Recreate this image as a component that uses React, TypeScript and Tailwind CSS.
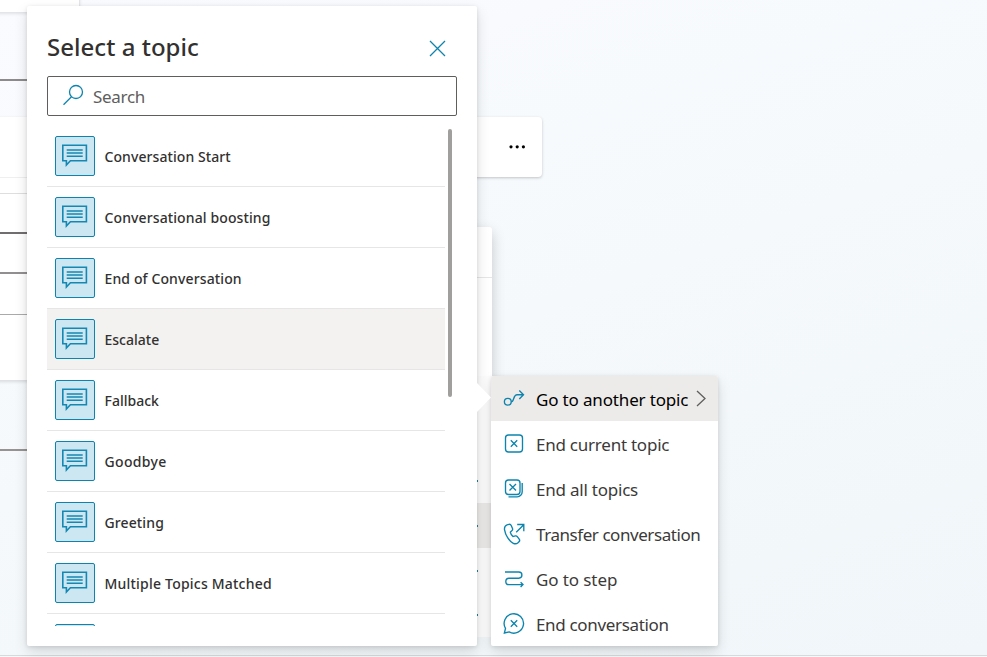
import React from "react";

const topics = [
  { name: "Conversation Start", cls: "tracking-[0.08px]" },
  { name: "Conversational boosting", cls: "tracking-[0.11px]" },
  { name: "End of Conversation", cls: "tracking-[0.12px]" },
  { name: "Escalate", cls: "tracking-[0px]", active: true },
  { name: "Fallback", cls: "tracking-[0px]" },
  { name: "Goodbye", cls: "tracking-[0.35px]" },
  { name: "Greeting", cls: "tracking-[0.12px]" },
  { name: "Multiple Topics Matched", cls: "tracking-[0.21px]" },
  { name: "", cls: "" },
];

function TopicIcon() {
  return (
    <div className="h-10 w-10 shrink-0 rounded-[2px] border border-[#0d84ad] bg-[#cce7f1]">
      <svg width="38" height="38" viewBox="0 0 38 38" fill="none" stroke="#1488b2">
        <path d="M6.8 8.2H30.4V23.8H14.4L10.4 28V23.8H6.8Z" strokeWidth="1.6" />
        <path d="M10.7 13H26.7M10.7 16.1H26.7M10.7 19.2H26.7" strokeWidth="1.5" />
      </svg>
    </div>
  );
}

const iconPaths: Record<string, React.ReactNode> = {
  goTo: (
    <>
      <circle cx="4.8" cy="13.7" r="3.4" />
      <path d="M8.2 13.7C11.5 13.7 9.7 7 14.2 6.7H20M16.3 2.5L20.5 6.7L16.3 10.9" />
    </>
  ),
  end: (
    <>
      <rect x="2.5" y="2" width="17" height="17" rx="3" />
      <path d="M7.8 7.3L14.2 13.7M14.2 7.3L7.8 13.7" />
    </>
  ),
  endAll: (
    <>
      <rect x="2.5" y="2" width="14.5" height="14.5" rx="3" />
      <path d="M6.5 6L13 12.5M13 6L6.5 12.5M19.2 5V13.8A5 5 0 0 1 14.2 18.8H5.5" />
    </>
  ),
  transfer: (
    <>
      <path d="M4 1.8L6 1.3C7 1.1 7.8 1.5 8.2 2.4L9.5 5.4C9.8 6.2 9.6 7 9 7.6L7.3 9.2C7.6 10.6 8.8 12.7 10.1 13.6L12.3 12.9C13.1 12.7 13.8 12.9 14.3 13.6L16.2 16.2C16.8 17 16.7 18 16 18.7L15 19.7C13.7 20.9 12 21.1 10.3 20.3C6 18.2 2.4 12.1 1.5 6.6C1.3 4.2 2.2 2.4 4 1.8Z" />
      <path d="M13.2 9.2L20.5 1.9M14.2 1.5H20.8V8.3" />
    </>
  ),
  step: (
    <path d="M2 4H15.8A3.1 3.1 0 0 1 15.8 10.2H6A3.2 3.2 0 0 0 6 16.6H20M17.6 14.2L20 16.6L17.6 19" />
  ),
  endConv: (
    <>
      <path d="M1.4 20L2.5 15.4A9.7 9.7 0 1 1 6.1 18.9Z" />
      <path d="M7.8 7.3L14.2 13.7M14.2 7.3L7.8 13.7" />
    </>
  ),
};

const actions = [
  { icon: "goTo", label: "Go to another topic", cls: "tracking-[-0.16px]", active: true },
  { icon: "end", label: "End current topic", cls: "tracking-[-0.24px]" },
  { icon: "endAll", label: "End all topics", cls: "tracking-[-0.22px]" },
  { icon: "transfer", label: "Transfer conversation", cls: "tracking-[-0.44px]" },
  { icon: "step", label: "Go to step", cls: "tracking-[-0.1px]" },
  { icon: "endConv", label: "End conversation", cls: "tracking-[-0.34px]" },
];

function CanvasNodes() {
  return (
    <>
      <div className="absolute -left-2 -top-2 h-[21px] w-[88px] border border-[#e3e5e8] bg-white shadow-[0_1px_3px_rgba(0,0,0,0.1)]" />
      <div className="absolute left-0 top-[79px] h-[2px] w-10 bg-[#8e8a8b]" />
      <div className="absolute -left-2 top-[117px] flex h-[264px] w-[200px] flex-col border-b border-[#dfe1e4] bg-white shadow-[0_1px_3px_rgba(0,0,0,0.12)]">
        <div className="h-[61px] border-b border-[#efefef]" />
        <div className="h-[16px] border-b border-[#dededf]" />
        <div className="h-[40px] border-b-2 border-[#706e6e]" />
        <div className="h-[40px] border-b-2 border-[#918f8f]" />
        <div className="h-[41px] border-b border-[#aaa]" />
      </div>
      <div className="absolute left-0 top-[449px] h-[2px] w-10 bg-[#979393]" />
      <div className="absolute left-[440px] top-[117px] flex h-[60px] w-[102px] items-center justify-end rounded-[4px] bg-white pr-[17px] shadow-[0_1px_3px_rgba(0,0,0,0.22)]">
        <svg width="16" height="4" viewBox="0 0 16 4" fill="#000">
          <circle cx="2" cy="1.8" r="1.6" />
          <circle cx="8.2" cy="1.8" r="1.6" />
          <circle cx="14.4" cy="1.8" r="1.6" />
        </svg>
      </div>
      <div className="absolute left-[440px] top-[227px] h-[180px] w-[52px] rounded-tr-[3px] bg-white shadow-[0_5px_14px_rgba(0,0,0,0.2)]">
        <div className="h-[51px] border-b border-[#e6e6e6]" />
      </div>
      <div className="absolute left-[440px] top-[376px] flex h-[261px] w-[60px] flex-col bg-[#fdfdfd] pt-[82px]">
        {[0, 1, 2, 3].map((i) => (
          <div key={i} className={i === 1 ? "h-[45px] bg-[#edebe9] pl-[36px] pt-[22px]" : "h-[45px] pl-[36px] pt-[22px]"}>
            <div className="h-[2px] w-[2px] bg-[#2c7d99]" />
          </div>
        ))}
      </div>
      <div className="absolute bottom-0 left-0 h-[2px] w-full border-t border-[#d8d9db] bg-[#f7f8f9]" />
    </>
  );
}

function TopicPicker() {
  return (
    <section className="absolute left-[27px] top-[6px] flex h-[640px] w-[450px] flex-col rounded-[2px] bg-white px-5 pb-5 shadow-[0_6px_14px_rgba(0,0,0,0.13),0_1px_4px_rgba(0,0,0,0.11)]">
      <header className="flex h-[70px] items-center justify-between pr-[11px] pt-3">
        <h1 className="whitespace-nowrap text-[24px] font-[550] leading-8 tracking-[0.03px] text-[#323130]">Select a topic</h1>
        <svg className="mt-[3px]" width="17" height="17" viewBox="0 0 17 17" fill="none" stroke="#0d84ad" strokeWidth="1.3">
          <path d="M1 1L16 16M16 1L1 16" />
        </svg>
      </header>
      <div className="flex h-10 shrink-0 items-center rounded-[2px] border border-[#605e5c] pl-[14px]">
        <svg className="-mt-[2px]" width="22" height="22" viewBox="0 0 22 22" fill="none" stroke="#0d84ad" strokeWidth="1.3">
          <circle cx="14" cy="8" r="6.5" />
          <path d="M9.5 12.7L1.5 20.7" />
        </svg>
        <span className="pl-[9px] pt-[2px] text-[17px] tracking-[-0.3px] text-[#605e5c]">Search</span>
      </div>
      <div className="mt-[10px] flex h-[500px] items-start justify-between overflow-hidden pr-[5px]">
        <ul className="w-[398px]">
          {topics.map((t) => (
            <li
              key={t.name}
              className={
                t.active
                  ? "flex h-[61px] items-center border-b border-[#e6e6e6] bg-[#f3f2f1] pl-2"
                  : "flex h-[61px] items-center border-b border-[#e6e6e6] pl-2"
              }
            >
              <TopicIcon />
              {t.name && (
                <span className={`whitespace-nowrap pl-[9.5px] text-[14px] font-[550] text-[#323130] ${t.cls}`}>{t.name}</span>
              )}
            </li>
          ))}
        </ul>
        <div className="mt-[3px] h-[268px] w-1 rounded-full bg-[#a19f9d]" />
      </div>
      <svg className="absolute -right-[14px] top-[377px]" width="14" height="30" viewBox="0 0 14 30" fill="#fff">
        <path d="M0 0L14 14.5L0 29Z" />
      </svg>
    </section>
  );
}

function ActionMenu() {
  return (
    <ul className="absolute left-[491px] top-[376px] w-[227px] rounded-[2px] bg-white shadow-[0_6px_14px_rgba(0,0,0,0.13),0_1px_4px_rgba(0,0,0,0.11)]">
      {actions.map((a) => (
        <li
          key={a.label}
          className={
            a.active
              ? "flex h-[45px] items-center rounded-t-[2px] bg-[#edebe9] pl-[11.5px] text-black"
              : "flex h-[45px] items-center pl-[11.5px] text-[#3b3a39]"
          }
        >
          <svg className="shrink-0" width="22" height="22" viewBox="0 0 22 22" fill="none" stroke="#0d84ad" strokeWidth="1.35">
            {iconPaths[a.icon]}
          </svg>
          <span className={`whitespace-nowrap pl-[11.5px] pt-[2px] text-[17px] ${a.cls}`}>{a.label}</span>
          {a.active && (
            <svg className="ml-auto mr-3" width="10" height="17" viewBox="0 0 10 17" fill="none" stroke="#605e5c" strokeWidth="1.3">
              <path d="M1 1L9 8.5L1 16" />
            </svg>
          )}
        </li>
      ))}
    </ul>
  );
}

export default function App() {
  return (
    <main className="relative h-[657px] w-[987px] overflow-hidden bg-linear-160 from-[#fafbff] via-[#f5f9fc] to-[#f0f6f9] font-['Noto_Sans','Open_Sans',sans-serif]">
      <CanvasNodes />
      <ActionMenu />
      <TopicPicker />
    </main>
  );
}
